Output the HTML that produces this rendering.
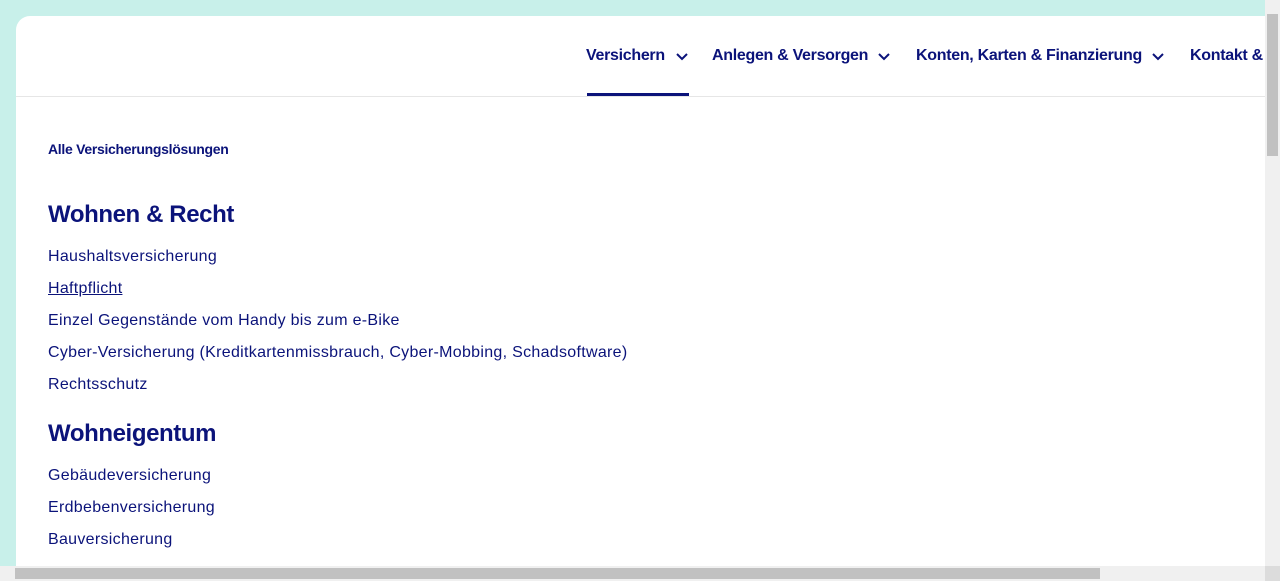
<!DOCTYPE html>
<html><head><meta charset="utf-8"><style>
*{margin:0;padding:0;box-sizing:border-box}
html,body{width:1280px;height:581px;overflow:hidden;background:#c8f0ea;font-family:"Liberation Sans",sans-serif;color:#0b137a}
.card{position:absolute;left:16px;top:16px;width:1249px;height:550px;background:#fff;border-top-left-radius:14px;overflow:hidden}
.hdr{position:absolute;left:0;top:0;width:100%;height:81px;border-bottom:1px solid #e6e6e6}
.nav{position:absolute;top:31px;font-weight:bold;font-size:16px;white-space:nowrap;letter-spacing:-0.3px}
.nav svg{position:absolute;top:5px}
.ul{position:absolute;left:571px;top:77px;width:102px;height:3px;background:#0b137a}
.t{position:absolute;left:32px;white-space:nowrap}
.s{font-size:14px;font-weight:bold;letter-spacing:-0.3px}
.h{font-size:24px;font-weight:bold;letter-spacing:-0.4px}
.l{font-size:16px;letter-spacing:0.3px}
.vs{position:absolute;left:1265px;top:0;width:15px;height:566px;background:#f0f0f0}
.vs i{position:absolute;left:2px;top:14px;width:11px;height:142px;background:#c1c1c1}
.hs{position:absolute;left:0;top:566px;width:1265px;height:15px;background:#f0f0f0}
.hs i{position:absolute;left:15px;top:2px;width:1085px;height:11px;background:#c1c1c1}
.cn{position:absolute;left:1265px;top:566px;width:15px;height:15px;background:#dcdcdc}
</style></head><body>
<div class="card">
<div class="hdr"></div>
<div class="nav" style="left:570px">Versichern<svg style="left:89px" width="14" height="10" viewBox="0 0 14 10"><path d="M2 2l5 5 5-5" fill="none" stroke="#0b137a" stroke-width="2"/></svg></div>
<div class="nav" style="left:696px">Anlegen &amp; Versorgen<svg style="left:165px" width="14" height="10" viewBox="0 0 14 10"><path d="M2 2l5 5 5-5" fill="none" stroke="#0b137a" stroke-width="2"/></svg></div>
<div class="nav" style="left:900px">Konten, Karten &amp; Finanzierung<svg style="left:235px" width="14" height="10" viewBox="0 0 14 10"><path d="M2 2l5 5 5-5" fill="none" stroke="#0b137a" stroke-width="2"/></svg></div>
<div class="nav" style="left:1174px">Kontakt &amp; Service</div>
<div class="ul"></div>
<div class="t s" style="top:125px">Alle Versicherungslösungen</div>
<div class="t h" style="top:185px">Wohnen &amp; Recht</div>
<div class="t l" style="top:232px">Haushaltsversicherung</div>
<div class="t l" style="top:264px;text-decoration:underline">Haftpflicht</div>
<div class="t l" style="top:296px">Einzel Gegenstände vom Handy bis zum e-Bike</div>
<div class="t l" style="top:328px">Cyber-Versicherung (Kreditkartenmissbrauch, Cyber-Mobbing, Schadsoftware)</div>
<div class="t l" style="top:360px">Rechtsschutz</div>
<div class="t h" style="top:404px">Wohneigentum</div>
<div class="t l" style="top:451px">Gebäudeversicherung</div>
<div class="t l" style="top:483px">Erdbebenversicherung</div>
<div class="t l" style="top:515px">Bauversicherung</div>
</div>
<div class="vs"><i></i></div>
<div class="hs"><i></i></div>
<div class="cn"></div>
</body></html>
